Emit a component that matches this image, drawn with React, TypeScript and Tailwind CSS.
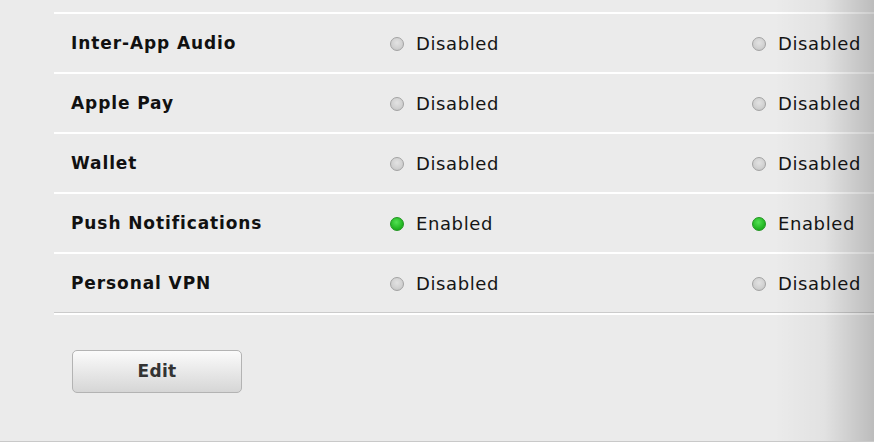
import React from "react";

const rows: { name: string; on: boolean }[] = [
  { name: "Inter-App Audio", on: false },
  { name: "Apple Pay", on: false },
  { name: "Wallet", on: false },
  { name: "Push Notifications", on: true },
  { name: "Personal VPN", on: false },
];

function Dot({ on }: { on: boolean }) {
  return on ? (
    <span className="inline-block w-[14px] h-[14px] rounded-full border border-[#1e951e] bg-[radial-gradient(circle_at_45%_35%,#52e052,#25b825_60%,#179817)]" />
  ) : (
    <span className="inline-block w-[14px] h-[14px] rounded-full border border-[#a3a3a3] bg-[radial-gradient(circle_at_50%_40%,#e2e2e2,#d0d0d0_60%,#bababa)]" />
  );
}

function Status({ on }: { on: boolean }) {
  return (
    <div className="flex items-center gap-[12px] pt-[1px]">
      <Dot on={on} />
      <span className="text-[18px] text-[#151515] tracking-[0.6px]">{on ? "Enabled" : "Disabled"}</span>
    </div>
  );
}

export default function App() {
  return (
    <div
      className="relative w-[874px] h-[442px] bg-[#ebebeb] overflow-hidden border-b border-[#c9c9c9]"
      style={{ fontFamily: '"DejaVu Sans", "Liberation Sans", sans-serif' }}
    >
      <div className="pt-[12px] ml-[54px]">
        {rows.map((r) => (
          <div key={r.name} className="h-[60px] border-t-2 border-white flex items-center">
            <div className="w-[336px] pl-[17px] pt-[1px] font-bold text-[17px] text-[#111] tracking-[0.9px]">
              {r.name}
            </div>
            <div className="w-[362px]">
              <Status on={r.on} />
            </div>
            <div>
              <Status on={r.on} />
            </div>
          </div>
        ))}
        <div className="border-t border-[#cbcbcb]" />
        <div className="border-t-2 border-white" />
        <div className="pt-[35px] pl-[18px]">
          <button className="w-[170px] h-[43px] rounded-[5px] border border-[#b3b3b3] bg-gradient-to-b from-[#fbfbfb] to-[#d6d6d6] text-[17px] font-bold text-[#333] tracking-[0.3px]">
            Edit
          </button>
        </div>
      </div>
      <div className="absolute top-0 right-0 w-[100px] h-full bg-gradient-to-r from-[rgba(0,0,0,0)] via-[rgba(0,0,0,0.04)] to-[rgba(0,0,0,0.2)] pointer-events-none" />
    </div>
  );
}
